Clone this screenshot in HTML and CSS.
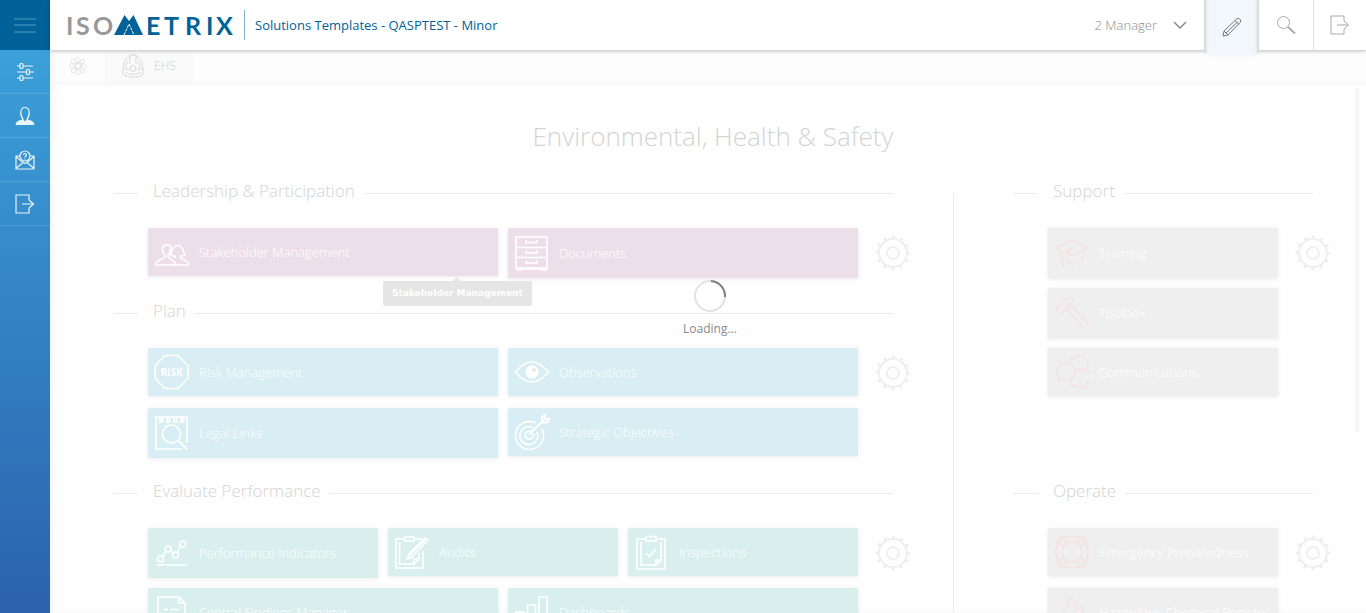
FILE: index.html
```html
<!DOCTYPE html>
<html lang="en">
<head>
<meta charset="utf-8">
<title>IsoMetrix - Environmental, Health &amp; Safety</title>
<link rel="stylesheet" href="styles.css">
</head>
<body>
<svg class="defs" width="0" height="0" aria-hidden="true">
  <symbol id="gear" viewBox="0 0 36 36">
    <circle cx="18" cy="18" r="14" stroke-width="1.6"/>
    <circle cx="18" cy="18" r="6" stroke-width="1.6"/>
    <circle cx="18" cy="18" r="16" stroke-width="2.6" stroke-dasharray="2.6 5.778" stroke-dashoffset="1.3"/>
  </symbol>
  <symbol id="exit" viewBox="0 0 20 20">
    <path d="M14 6V1H1v18h13v-5M7 10h11M14 6l4.500 4-4.500 4"/>
  </symbol>
</svg>
<div class="app">
  <nav class="side" aria-label="Main">
    <button class="side-menu" aria-label="Menu">
      <svg width="22" height="18" viewBox="0 0 22 18"><path d="M0 3h22M0 9h22M0 16h22"/></svg>
    </button>
    <a class="side-item" href="#" aria-label="Settings">
      <svg width="20" height="20" viewBox="0 0 20 20"><path d="M2 4h3M8 4h10M2 10h9M15 10h4M2 16h3M8 16h10"/><rect x="5" y="1.500" width="3" height="5" rx="1"/><rect x="11.500" y="7.500" width="3" height="5" rx="1"/><rect x="5" y="13.500" width="3" height="5" rx="1"/></svg>
    </a>
    <a class="side-item" href="#" aria-label="Profile">
      <svg width="20" height="20" viewBox="0 0 20 20"><path d="M8 13C4.500 9 5 1.500 10 1.500S15.500 9 12 13"/><path class="solid" d="M7.500 12l2.500 3.500 2.500-3.500.5 1.500c3.500 1 6 2 6.500 5.500h-19c.5-3.500 3-4.500 6.500-5.500z"/></svg>
    </a>
    <a class="side-item" href="#" aria-label="Help">
      <svg width="20" height="20" viewBox="0 0 20 20"><path d="M5 6H1v13h18V6h-4M1 6.500l7 6-7 6M19 6.500l-7 6 7 6M8 12.500l2 1 2-1"/><circle cx="10" cy="6" r="5"/><path d="M8.500 5c0-2 3-2 3 0 0 1.200-1.500 1-1.500 2.500M10 8.500v1"/></svg>
    </a>
    <a class="side-item" href="#" aria-label="Sign out">
      <svg width="20" height="20"><use href="#exit"/></svg>
    </a>
  </nav>

  <div class="page">
    <header class="top">
      <svg class="logo" width="170" height="40" viewBox="0 0 170 40" role="img" aria-label="IsoMetrix">
        <text class="logo-grey" x="-1 9 26" y="30">ISO</text>
        <path d="M47 30L57.500 10l4.500 6 4.500-6L76 30z"/>
        <path class="logo-line" d="M57 30l5-11 5 11"/>
        <text class="logo-blue" x="79 97 118 139 149" y="30">ETRIX</text>
      </svg>
      <span class="site">Solutions Templates - QASPTEST - Minor</span>
      <button class="role">2 Manager
        <svg width="14" height="8" viewBox="0 0 14 8"><path d="M1 1l6 6 6-6"/></svg>
      </button>
      <button class="tool tool-active" aria-label="Edit">
        <svg width="20" height="20" viewBox="0 0 20 20"><path d="M1 19l1-5L14.500 2q1.500-1.500 3 0l.5.500q1.500 1.500 0 3L6 18zM2 14l4 4M13 3.500l4 4M4 16L15.500 5"/></svg>
      </button>
      <button class="tool" aria-label="Search">
        <svg width="20" height="20" viewBox="0 0 20 20"><circle cx="7.500" cy="7.500" r="6"/><path d="M12 12l7 6.500" stroke-width="2"/></svg>
      </button>
      <button class="tool tool-last" aria-label="Exit">
        <svg width="20" height="20"><use href="#exit"/></svg>
      </button>
    </header>

    <div class="tabs">
      <a class="tab tab-home" href="#" aria-label="Home">
        <svg width="20" height="20" viewBox="0 0 20 20"><circle cx="10" cy="10" r="2.500"/><ellipse cx="10" cy="10" rx="3" ry="9"/><ellipse cx="10" cy="10" rx="9" ry="3"/><ellipse cx="10" cy="10" rx="3" ry="9" transform="rotate(45 10 10)"/><ellipse cx="10" cy="10" rx="3" ry="9" transform="rotate(-45 10 10)"/></svg>
      </a>
      <a class="tab tab-current" href="#">
        <svg width="24" height="24" viewBox="0 0 24 24"><path d="M2.500 15C2 7 6 3 9 2.500V1h6v1.500C18 3 22 7 21.500 15M9 2.500V10M15 2.500V10M5 14c0-4 1-6 2-7M19 14c0-4-1-6-2-7M2 15h6M16 15h6M1.500 15.500c-1 6 3 7.500 10.500 7.500s11.500-1.500 10.500-7.500M4 18c3 3 13 3 16 0"/><circle cx="12" cy="14.500" r="3"/></svg>
        EHS
      </a>
    </div>

    <main class="content">
      <h1>Environmental, Health &amp; Safety</h1>
      <div class="columns">
        <div class="col-main">
          <section>
            <h2>Leadership &amp; Participation</h2>
            <div class="body">
              <div class="tiles pink">
                <a class="tile half" href="#">
                  <svg class="icon" viewBox="0 0 36 36"><path d="M14 23c2 2 6 3 7 5.500V31H2v-2c1-3 7-3.500 9-6v-2C7 17 7.500 12 12 11q4-1 5.500 3"/><path d="M14 23v-2c2-1.500 2.800-4 2.500-7M21 24v-2c-2 0-3.500 0-4.500-1 2-2 .5-9 7-9.500s5.500 8 7.500 9.500c-1.500 1-3 1-4.500 1v2c2 2 6.500 2 7.500 5v2H21"/></svg>
                  Stakeholder Management
                  <span class="tip" role="tooltip">Stakeholder Management</span>
                </a>
                <a class="tile half tall" href="#">
                  <svg class="icon" viewBox="0 0 36 36"><path d="M2 2h31v31H2zM3 12.500h29M3 22.500h29M3 33h29v2h-5v-1H8v1H3zM12 5v2.500h11V5M12 15.500V18h11v-2.500M12 25.500V28h11v-2.500"/></svg>
                  Documents
                </a>
              </div>
              <button class="gear" aria-label="Configure Leadership &amp; Participation"><svg width="36" height="36"><use href="#gear"/></svg></button>
            </div>
          </section>

          <section>
            <h2>Plan</h2>
            <div class="body">
              <div class="tiles blue">
                <a class="tile half" href="#">
                  <svg class="icon" viewBox="0 0 36 36"><path d="M11 1.500h13L34 12v12L24 34.500H11L1 24V12z"/><text x="17.500" y="22" text-anchor="middle">RISK</text></svg>
                  Risk Management
                </a>
                <a class="tile half" href="#">
                  <svg class="icon" viewBox="0 0 36 36"><path d="M1.500 18q16-20 33 0-17 20-33 0z"/><path class="solid" fill-rule="evenodd" d="M18 11.500a6.500 6.500 0 1 0 .1 0zM20 14a2 2 0 1 1-.1 0z"/></svg>
                  Observations
                </a>
                <a class="tile half tall" href="#">
                  <svg class="icon" viewBox="0 0 36 36"><path d="M28 34H2V2h31v26"/><circle cx="17.500" cy="19" r="9"/><path d="M24 25.500l9.500 9M6 3v4h2.500V3M13 3v4h2.500V3M20 3v4h2.500V3M27 3v4h2.500V3" stroke-width="2"/></svg>
                  Legal Links
                </a>
                <a class="tile half" href="#">
                  <svg class="icon" viewBox="0 0 36 36"><path d="M22 9A14 14 0 1 0 28 15M19.500 14A9 9 0 1 0 23 18M17 17.500a4 4 0 1 0 2 2"/><path d="M15 20.500L32 4M28 8V3l3-2v4h5l-3 3.500h-4.500" stroke-width="2"/></svg>
                  Strategic Objectives
                </a>
              </div>
              <button class="gear" aria-label="Configure Plan"><svg width="36" height="36"><use href="#gear"/></svg></button>
            </div>
          </section>

          <section>
            <h2>Evaluate Performance</h2>
            <div class="body">
              <div class="tiles teal">
                <a class="tile third tall" href="#">
                  <svg class="icon" viewBox="0 0 36 36"><path d="M2 30h31M8.500 21.500l4-6M16.500 15.500l3.500 3M23 18l4-8"/><circle cx="6.500" cy="24" r="3"/><circle cx="14" cy="14" r="3"/><circle cx="21.500" cy="20" r="3"/><circle cx="28.500" cy="9" r="3"/></svg>
                  Performance Indicators
                </a>
                <a class="tile third" href="#">
                  <svg class="icon" viewBox="0 0 36 36"><path d="M11 5H2v29h27V17M20 5h8M11 3h9v4h-9zM5.500 8v22H20l5-5v-6M20 30v-5h5z"/><path d="M13 25l2-5L31 4l3 2-16 17zM15 22L31 6"/></svg>
                  Audits
                </a>
                <a class="tile third" href="#">
                  <svg class="icon" viewBox="0 0 36 36"><path d="M12 5H3v30h28V5h-9M12 2.500h10V7H12zM7 8v23h15l5-5V8M22 31v-5h5zM12 19l3.500 3.500L22 15"/></svg>
                  Inspections
                </a>
                <a class="tile half" href="#">
                  <svg class="icon" viewBox="0 0 36 36"><path d="M4 34V3h21l6 6v25zM25 3v6h6M10 15.500h4M16 15.500h9M10 21h15M10 27h15"/></svg>
                  Central Findings Manager
                </a>
                <a class="tile half" href="#">
                  <svg class="icon" viewBox="0 0 36 36"><path d="M2 34V18h8v16zM13.500 34V11h8v23zM25 34V3h8v31z"/></svg>
                  Dashboards
                </a>
              </div>
              <button class="gear" aria-label="Configure Evaluate Performance"><svg width="36" height="36"><use href="#gear"/></svg></button>
            </div>
          </section>
        </div>

        <div class="col-side">
          <section class="roomy">
            <h2>Support</h2>
            <div class="body">
              <div class="tiles grey">
                <a class="tile full tall" href="#">
                  <svg class="icon" viewBox="0 0 36 36"><path d="M9 17L2 13.500 18 5l16 8-16 7.500-5-2 5-5-9 3.500v14M6 17v8l3 2M29 17v8q-6 1-10 5-3-3-6-3v-5"/></svg>
                  Training
                </a>
                <a class="tile full tall" href="#">
                  <svg class="icon" viewBox="0 0 36 36"><path d="M2 14L10 5q5-3 9-2l1 3L7 19zM12 14l18 19 5-4L16 10"/></svg>
                  Toolbox
                </a>
                <a class="tile full" href="#">
                  <svg class="icon" viewBox="0 0 36 36"><path d="M4.500 27.500l1-4a9 8.500 0 1 1 3 1.800zM15 10.500a9.500 8.500 0 1 1 14.500 7.500M20.500 18a9 8.500 0 1 1 11.500 12.500l.5 4-4-2a9 8.500 0 0 1-13-7.500"/></svg>
                  Communications
                </a>
              </div>
              <button class="gear" aria-label="Configure Support"><svg width="36" height="36"><use href="#gear"/></svg></button>
            </div>
          </section>

          <section>
            <h2>Operate</h2>
            <div class="body">
              <div class="tiles grey">
                <a class="tile full" href="#">
                  <svg class="icon" viewBox="0 0 36 36"><circle cx="18" cy="18" r="16"/><circle cx="18" cy="18" r="10"/><path d="M12 3Q3 1 3 10M24 3q9-2 9 7M12 33q-9 2-9-7M24 33q9 2 9-7M4 9l6 4M9 4l4 5M27 4l-4 5M32 9l-6 4M4 27l6-4M9 32l4-5M32 27l-6-4M27 32l-4-5"/></svg>
                  Emergency Preparedness
                </a>
                <a class="tile full" href="#">
                  <svg class="icon" viewBox="0 0 36 36"><path d="M12 35C5 32 3 26 8 20c5-5 7-9 6-17 7 3 9 8 8 13l6-3c-1 6 5 8 4 15-1 4-4 6-7 7"/></svg>
                  Hazardous Chemical Register
                </a>
              </div>
              <button class="gear" aria-label="Configure Operate"><svg width="36" height="36"><use href="#gear"/></svg></button>
            </div>
          </section>
        </div>
      </div>
      <div class="scroll-thumb"></div>
    </main>

    <div class="loader" role="status">
      <svg width="34" height="34" viewBox="0 0 34 34"><circle cx="17" cy="17" r="15"/><path d="M18 2a15 15 0 0 1 14 16"/></svg>
      Loading...
    </div>
  </div>
</div>
</body>
</html>
```

FILE: styles.css
```css
* { box-sizing: border-box; }

body {
  margin: 0;
  font-family: "Open Sans", "Noto Sans", sans-serif;
  font-weight: 300;
  background: #fefefe;
}

a { color: inherit; text-decoration: none; }

button {
  margin: 0;
  padding: 0;
  border: 0;
  background: none;
  font: inherit;
  color: inherit;
}

svg {
  display: block;
  flex: none;
  fill: none;
  stroke: currentColor;
  stroke-width: 1;
}

.defs { position: absolute; }
.solid { fill: currentColor; stroke: none; }

.app { display: flex; height: 100vh; overflow: hidden; }

/* Left navigation */
.side {
  flex: none;
  width: 50px;
  color: #e8f4fb;
  background: linear-gradient(#3ca5dc, #2b62ad);
}

.side-menu {
  display: grid;
  place-items: center;
  width: 100%;
  height: 50px;
  color: #2a7fab;
  background: #006298;
}
.side-menu svg { stroke-width: 2; }

.side-item {
  display: grid;
  place-items: center;
  height: 44px;
  border-bottom: 1px solid #ffffff26;
}
.side-item svg { stroke-width: 1.2; }

.page {
  position: relative;
  display: flex;
  flex-direction: column;
  flex: 1;
  min-width: 0;
}

/* Top bar */
.top {
  position: relative;
  z-index: 2;
  display: flex;
  align-items: center;
  flex: none;
  height: 50px;
  padding-left: 17px;
  background: #fff;
  box-shadow: 0 1px 4px #00000040;
  color: #8c8c8c;
}

.logo { overflow: visible; }
.logo text { font: 700 25px Lato, sans-serif; stroke: none; }
.logo .logo-grey { fill: #999; }
.logo .logo-blue { fill: #006298; }
.logo path { fill: #006298; stroke: none; }
.logo .logo-line { fill: none; stroke: #fff; stroke-dasharray: 3 1; }

.site {
  margin-left: 7px;
  padding-left: 10px;
  border-left: 1px solid #7fb0cb;
  font-size: 13px;
  font-weight: 400;
  line-height: 30px;
  color: #006298;
}

.role {
  display: flex;
  align-items: center;
  gap: 16px;
  margin-left: auto;
  padding-right: 17px;
  font-size: 13px;
}
.role svg { stroke-width: 1.5; }

.tool {
  display: grid;
  place-items: center;
  width: 54px;
  height: 50px;
  color: #aaa;
}
.tool-active {
  align-self: flex-start;
  width: 55px;
  height: 53px;
  color: #777;
  background: #f2f7fb;
  box-shadow: inset 5px 0 4px -4px #00000033, inset -5px 0 4px -4px #00000033, 0 6px 6px -3px #f2f7fb;
}
.tool-last { width: 53px; border-left: 1px solid #ddd; }

/* Tab strip */
.tabs {
  display: flex;
  flex: none;
  height: 34px;
  border-bottom: 1px solid #f3f3f3;
  background: #fdfdfd;
  box-shadow: inset 4px 0 4px #00000008;
  font-size: 12px;
  color: #cfcfcf;
}
.tab { display: flex; align-items: center; }
.tab svg { stroke-width: 0.8; }
.tab-home { width: 55px; padding: 0 0 2px 18px; color: #e2e2e2; }
.tab-current {
  gap: 9px;
  padding: 0 18px 2px 16px;
  background: #fafafa;
}

/* Workspace */
.content {
  position: relative;
  flex: 1;
  min-height: 0;
  padding: 30px 53px 0 63px;
  overflow: hidden;
  box-shadow: inset 4px 0 4px #00000008;
}

h1 {
  margin: 0;
  font-size: 26px;
  font-weight: 300;
  line-height: 44px;
  text-align: center;
  color: #d4d4d4;
}

.columns {
  display: grid;
  grid-template-columns: minmax(0, 1fr) 360px;
  margin-top: 35px;
}
.col-main { padding-right: 60px; }
.col-side { padding-left: 59px; border-left: 1px solid #ececec; }

section { padding-bottom: 13px; }
.roomy { padding-bottom: 73px; }

/* The rule sits slightly below the middle of the heading text */
h2 {
  display: flex;
  align-items: center;
  margin: 0 0 23px;
  padding-bottom: 4px;
  font-size: 17px;
  font-weight: 300;
  line-height: 20px;
  color: #d4d4d4;
}
section:first-child h2 { margin-top: -12px; }
h2::before, h2::after {
  content: "";
  height: 1px;
  margin-top: 5px;
  background: #ececec;
}
h2::before { width: 25px; margin-right: 15px; }
h2::after { flex: 1; margin-left: 9px; }

.body {
  display: grid;
  grid-template-columns: minmax(0, 1fr) 36px;
  gap: 17px;
  margin: 0 -18px 0 35px;
}

.tiles {
  display: grid;
  grid-template-columns: repeat(6, minmax(0, 1fr));
  grid-auto-rows: 60px;
  align-items: start;
  column-gap: 10px;
}

.tile {
  position: relative;
  display: flex;
  align-items: center;
  gap: 9px;
  height: 48px;
  padding-left: 6px;
  font-size: 13px;
  white-space: nowrap;
  color: #fff;
  box-shadow: 0 1px 4px #00000014;
}
.tall { height: 50px; }
.third { grid-column: span 2; }
.half { grid-column: span 3; }
.full { grid-column: span 6; }

.pink .tile { background: #ecdfe9; }
.blue .tile { background: #d9edf4; }
.teal .tile { background: #d9efee; }
.grey .tile { background: #efefef; }
.grey .icon { color: #f6dfe4; stroke-width: 1.2; }

.icon { width: 36px; height: 36px; stroke-width: 1.6; }
.icon text {
  font: 700 10px "Open Sans", sans-serif;
  fill: currentColor;
  stroke: none;
}

.gear { align-self: start; margin-top: 7px; color: #ececec; }

.tip {
  position: absolute;
  z-index: 1;
  top: 53px;
  left: 235px;
  padding: 0 9px;
  border-radius: 2px;
  background: #e5e5e5;
  font: 700 9px/25px "DejaVu Sans", sans-serif;
}
.tip::before {
  content: "";
  position: absolute;
  top: -4px;
  left: 70px;
  border: 4px solid transparent;
  border-top: 0;
  border-bottom-color: #e5e5e5;
}

.scroll-thumb {
  position: absolute;
  top: 4px;
  right: 7px;
  width: 4px;
  height: 344px;
  background: #f6f6f6;
}

/* Busy indicator */
.loader {
  position: absolute;
  inset: 0;
  z-index: 1;
  display: flex;
  flex-direction: column;
  align-items: center;
  justify-content: center;
  gap: 8px;
  padding: 2px 0 0 4px;
  font-size: 12px;
  font-weight: 400;
  line-height: 16px;
  color: #8a8a8a;
  pointer-events: none;
}
.loader circle { stroke: #e2e2e2; stroke-width: 2; }
.loader path { stroke: #808080; stroke-width: 2; }
```
